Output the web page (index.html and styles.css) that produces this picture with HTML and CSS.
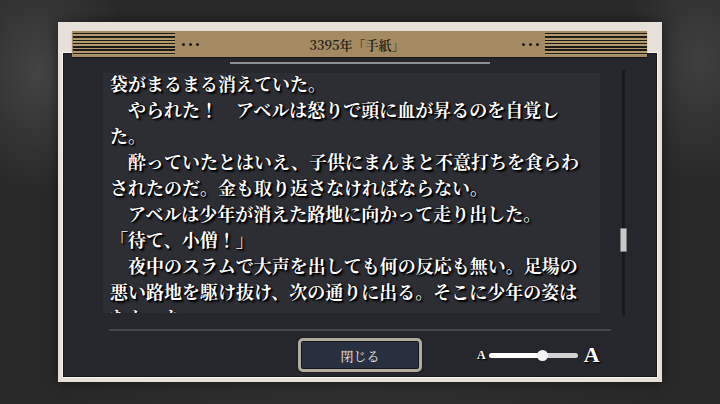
FILE: index.html
```html
<!DOCTYPE html>
<html lang="ja">
<head>
    <meta charset="UTF-8">
    <meta name="viewport" content="width=device-width, initial-scale=1.0">
    <title>3395年「手紙」</title>
    <link rel="stylesheet" href="styles.css">
</head>
<body>

<div class="screen">
    <div class="frame">
        <!-- タイトル帯 -->
        <div class="header">
            <span class="stripes"></span>
            <span class="dots"><i></i><i></i><i></i></span>
            <h1 class="title">3395年「手紙」</h1>
            <span class="dots"><i></i><i></i><i></i></span>
            <span class="stripes"></span>
        </div>

        <div class="panel">
            <div class="rule"></div>

            <!-- 本文 -->
            <div class="reader">
                <div class="page">
                    <div class="text">
                        <p>袋がまるまる消えていた。</p>
                        <p>　やられた！　アベルは怒りで頭に血が昇るのを自覚した。</p>
                        <p>　酔っていたとはいえ、子供にまんまと不意打ちを食らわされたのだ。金も取り返さなければならない。</p>
                        <p>　アベルは少年が消えた路地に向かって走り出した。</p>
                        <p>「待て、小僧！」</p>
                        <p>　夜中のスラムで大声を出しても何の反応も無い。足場の悪い路地を駆け抜け、次の通りに出る。そこに少年の姿はなかった。</p>
                    </div>
                </div>
                <div class="scrollbar"><div class="thumb"></div></div>
            </div>

            <div class="divider"></div>

            <!-- 閉じるボタンと文字サイズ -->
            <div class="footer">
                <div></div>
                <button class="close">閉じる</button>
                <div class="size">
                    <span class="a-small">A</span>
                    <div class="track"><span class="knob"></span></div>
                    <span class="a-big">A</span>
                </div>
            </div>
        </div>
    </div>
</div>

</body>
</html>
```

FILE: styles.css
```css
body {
    margin: 0;
    height: 404px;
    overflow: hidden;
    background-color: #292929;
    background-image:
        radial-gradient(ellipse 90px 120px at 40px 70px, rgba(90, 90, 90, 0.55), transparent),
        radial-gradient(ellipse 80px 120px at 700px 60px, rgba(85, 85, 85, 0.5), transparent),
        radial-gradient(ellipse 300px 120px at 360px 420px, rgba(60, 60, 60, 0.4), transparent);
    font-family: "Noto Serif CJK JP", "Noto Sans CJK JP", serif;
}
.screen {
    height: 404px;
    display: flex;
    justify-content: center;
    align-items: center;
}
.frame {
    width: 604px;
    height: 360px;
    box-sizing: border-box;
    padding: 9px 5px 5px 5px;
    background-color: #e6e0d8;
    display: flex;
    flex-direction: column;
    box-shadow: 0 0 12px rgba(0, 0, 0, 0.5);
}
.header {
    position: relative;
    z-index: 1;
    height: 26px;
    margin: 0 10px -4px 9px;
    background-color: #a38a62;
    display: flex;
    align-items: center;
    box-shadow: 0 1px 1px rgba(0, 0, 0, 0.4);
}
.stripes {
    width: 102px;
    height: 22px;
    margin-left: 1px;
    background: repeating-linear-gradient(to bottom, #1c1a16 0, #1c1a16 1.5px, #b39a6d 1.5px, #b39a6d 3.3px);
}
.header .stripes:last-child {
    margin-left: 6px;
}
.dots {
    display: flex;
    gap: 4px;
    margin-left: 7px;
}
.dots i {
    width: 3px;
    height: 3px;
    border-radius: 50%;
    background-color: #1c1a16;
}
.title {
    flex: 1;
    margin: 0;
    text-align: center;
    font-family: "Noto Serif CJK JP", "Liberation Serif", "Noto Sans CJK JP", serif;
    font-size: 13px;
    font-weight: 600;
    color: #1e1a14;
}
.panel {
    flex: 1;
    background-color: #26272c;
    border: 1px solid #17181c;
    box-shadow: 0 0 0 1px #f8f6f2;
    display: flex;
    flex-direction: column;
}
.rule {
    width: 260px;
    height: 2px;
    margin: 8px auto 0;
    background-color: #8e8f93;
}
.reader {
    display: flex;
    height: 243px;
    margin-top: 6px;
}
.page {
    width: 497px;
    margin-left: 39px;
    background: linear-gradient(to bottom, #26272c 0, #26272c 3px, #2d2e34 3px);
    overflow: hidden;
}
.text {
    padding: 0 20px 0 7px;
}
.text p {
    margin: 0;
    font-size: 18px;
    line-height: 26px;
    font-weight: 700;
    color: #ffffff;
    text-shadow: 1px 1px 0 #000, 2px 2px 2px #000, 0 0 2px #000;
}
.scrollbar {
    width: 7px;
    margin: 0 0 -3px 20px;
    background: linear-gradient(to right, transparent 2px, #18191d 2px, #18191d 5px, transparent 5px);
}
.thumb {
    width: 5px;
    height: 22px;
    margin-top: 158px;
    background-color: #c9c9c9;
    border: 1px solid #7d7d7d;
    border-radius: 1px;
}
.divider {
    width: 502px;
    height: 2px;
    margin: 16px 0 0 45px;
    background-color: #43454c;
}
.footer {
    display: grid;
    grid-template-columns: 1fr auto 1fr;
    align-items: center;
    margin-top: 7px;
}
.close {
    width: 124px;
    height: 34px;
    padding: 0;
    background-color: #283040;
    border: 3px solid #b2ac9e;
    border-radius: 5px;
    box-shadow: inset 0 0 0 1px #14171e, 0 0 2px rgba(0, 0, 0, 0.6);
    color: #e8e8e8;
    font-family: "Noto Serif CJK JP", "Noto Sans CJK JP", serif;
    font-size: 13px;
}
.size {
    display: flex;
    align-items: center;
    margin-left: 55px;
}
.a-small, .a-big {
    font-family: "Liberation Serif", serif;
    font-weight: 700;
    color: #ffffff;
    text-shadow: 1px 1px 0 #000, 1px 1px 2px #000;
}
.a-small {
    font-size: 12px;
}
.a-big {
    font-size: 22px;
    margin-left: 6px;
}
.track {
    position: relative;
    width: 89px;
    height: 5px;
    margin-left: 3px;
    border-radius: 3px;
    background: linear-gradient(to right, #ffffff 0, #ffffff 60%, #d2d2d2 60%);
}
.knob {
    position: absolute;
    left: 48px;
    top: -3px;
    width: 11px;
    height: 11px;
    border-radius: 50%;
    background-color: #f4f4f4;
}
```
